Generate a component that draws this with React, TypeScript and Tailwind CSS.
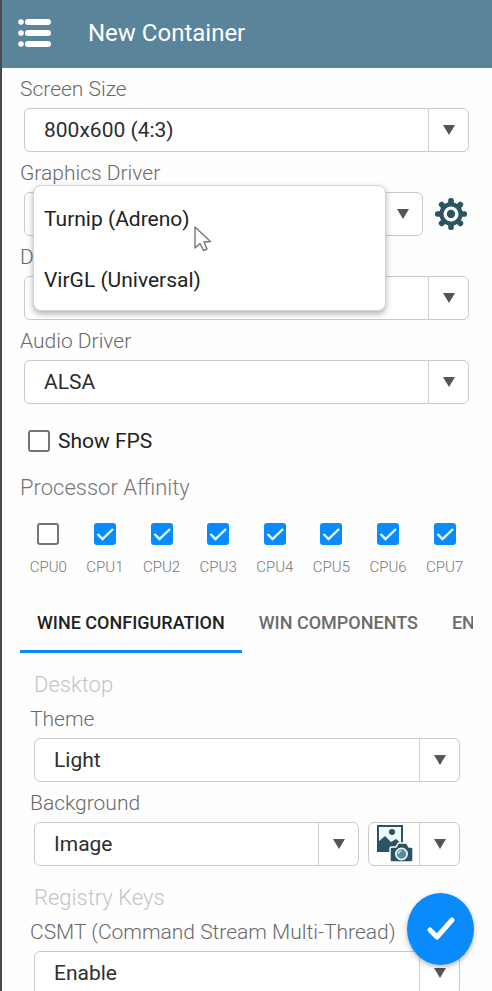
import type { ReactNode } from "react";
import { clsx } from "clsx";

type SelectFieldProps = {
  id: string;
  label: string;
  options: string[];
  className?: string;
};

const cpus = [0, 1, 2, 3, 4, 5, 6, 7];
const tabs = ["WINE CONFIGURATION", "WIN COMPONENTS", "ENVIRONMENT VARIABLES"];
const graphicsDrivers = ["Turnip (Adreno)", "VirGL (Universal)"];

function ArrowCell() {
  return (
    <span className="pointer-events-none absolute inset-y-0 right-0 flex w-10 items-center justify-center border-l border-[#d0d0d0]">
      <svg width="12" height="10" viewBox="0 0 12 10" aria-hidden="true">
        <path d="M0 0h12L6 10z" fill="#555" />
      </svg>
    </span>
  );
}

function SelectBox({ id, label, options, className }: Readonly<SelectFieldProps>) {
  return (
    <div className={clsx("relative h-11 rounded-md border border-[#cacaca] bg-white", className)}>
      <select
        id={id}
        aria-label={label}
        className="h-full w-full appearance-none bg-transparent pt-0.5 pr-11 pl-[19px] text-[21px] text-[#2e2e2e] outline-none"
      >
        {options.map((option) => (
          <option key={option}>{option}</option>
        ))}
      </select>
      <ArrowCell />
    </div>
  );
}

function FieldLabel({ htmlFor, children }: Readonly<{ htmlFor: string; children: ReactNode }>) {
  return (
    <label htmlFor={htmlFor} className="flex h-10 items-center whitespace-nowrap pt-1 text-[21px] font-light text-[#6a6a6a]">
      {children}
    </label>
  );
}

function Field({ id, label, options }: Readonly<SelectFieldProps>) {
  return (
    <div>
      <FieldLabel htmlFor={id}>{label}</FieldLabel>
      <SelectBox id={id} label={label} options={options} className="ml-1" />
    </div>
  );
}

function Checkbox({ id, defaultChecked = false }: Readonly<{ id: string; defaultChecked?: boolean }>) {
  return (
    <span className="relative flex size-[22px]">
      <input
        id={id}
        type="checkbox"
        defaultChecked={defaultChecked}
        className="peer size-[22px] appearance-none rounded-[3px] border-2 border-[#757575] bg-white checked:border-[#0a8bfb] checked:bg-[#0a8bfb]"
      />
      <svg
        viewBox="0 0 22 22"
        className="pointer-events-none absolute inset-0 hidden peer-checked:block"
        fill="none"
        stroke="#e8ffff"
        strokeWidth="2.4"
        aria-hidden="true"
      >
        <path d="M3.5 11l5 5L19 6" />
      </svg>
    </span>
  );
}

function MenuIcon() {
  return (
    <svg width="34" height="28" viewBox="0 0 34 28" fill="#fff" aria-hidden="true">
      {[0, 11, 22].map((y) => (
        <g key={y}>
          <circle cx="3" cy={y + 3} r="2.8" />
          <rect x="7" y={y} width="26" height="6" rx="3" />
        </g>
      ))}
    </svg>
  );
}

function GearIcon() {
  return (
    <svg width="32" height="34" viewBox="-17 -17 34 34" aria-hidden="true">
      <g fill="#2b5361">
        {[0, 45, 90, 135, 180, 225, 270, 315].map((angle) => (
          <rect key={angle} x="-3" y="-17" width="6" height="9" rx="2.4" transform={`rotate(${angle})`} />
        ))}
        <circle r="12.4" />
      </g>
      <circle r="6.2" fill="none" stroke="#fff" strokeWidth="3.6" />
    </svg>
  );
}

function WallpaperIcon() {
  return (
    <svg width="36" height="38" viewBox="0 0 36 38" aria-hidden="true">
      <path d="M1 1h24v25H1z" fill="#effcff" stroke="#2b5361" strokeWidth="2" />
      <circle cx="15" cy="7" r="3" fill="#2b5361" />
      <path d="M1 27V17l7-6 6 6 5-3 6 5v8z" fill="#2b5361" />
      <path
        d="M15 22h4l2.500-4h8l2.500 4h2.500q1.500 0 1.500 1.500v12q0 1.500-1.500 1.500H14.500q-1.500 0-1.500-1.500v-12q0-1.500 2-1.500z"
        fill="#2b5361"
        stroke="#fff"
        strokeWidth="1.400"
      />
      <circle cx="24.500" cy="29" r="5.600" fill="#5d8797" stroke="#e8f5f8" strokeWidth="1.800" />
      <path d="M21.500 29a3 3 0 0 1 3-3" fill="none" stroke="#e8f5f8" strokeWidth="1.200" />
    </svg>
  );
}

function CursorIcon() {
  return (
    <svg width="18" height="26" viewBox="0 0 18 26" className="absolute top-10 left-[160px]" aria-hidden="true">
      <path
        d="M1 1v21l5-4.500 3.500 7 3.500-1.500-3-7 6.500-.5z"
        fill="#fff"
        stroke="#777"
        strokeWidth="1.400"
        strokeLinejoin="round"
      />
    </svg>
  );
}

function DriverMenu() {
  return (
    <div
      role="listbox"
      aria-label="Graphics Driver"
      className="absolute -top-[7px] right-[37px] left-[9px] z-10 rounded-lg border border-[#d4d4d4] bg-white pt-0.5 shadow-[0_3px_6px_rgba(0,0,0,0.3)]"
    >
      {graphicsDrivers.map((driver, index) => (
        <button
          key={driver}
          type="button"
          role="option"
          aria-selected={index === 0}
          className="flex h-[61px] w-full items-center pt-0.5 pl-2.5 text-[21px] text-[#222]"
        >
          {driver}
        </button>
      ))}
      <CursorIcon />
    </div>
  );
}

function SectionTitle({ children }: Readonly<{ children: ReactNode }>) {
  return <h2 className="pl-1 text-[22px] leading-[26px] font-light text-[#c4c4c4]">{children}</h2>;
}

export default function App() {
  return (
    <div className="flex h-screen flex-col overflow-hidden border-l-2 border-[#4a4a4a] bg-[#fefefe] font-['Roboto',sans-serif]">
      <header className="flex h-[68px] shrink-0 items-center gap-9 bg-[#5a8499] pb-0.5 pl-4">
        <button type="button" aria-label="Menu">
          <MenuIcon />
        </button>
        <h1 className="text-2xl text-white">New Container</h1>
      </header>

      <main className="min-h-0 flex-1 overflow-hidden pr-[19px] pl-[18px]">
        <div className="pr-1">
          <Field id="screen-size" label="Screen Size" options={["800x600 (4:3)"]} />

          <FieldLabel htmlFor="graphics-driver">Graphics Driver</FieldLabel>
          <div className="flex items-center gap-3">
            <div className="relative ml-1 flex-1">
              <SelectBox id="graphics-driver" label="Graphics Driver" options={graphicsDrivers} />
              <DriverMenu />
            </div>
            <button type="button" aria-label="Graphics driver settings" className="mr-0.5">
              <GearIcon />
            </button>
          </div>

          <Field id="dx-wrapper" label="DX Wrapper" options={["DXVK"]} />
          <Field id="audio-driver" label="Audio Driver" options={["ALSA"]} />
        </div>

        <div className="mt-[26px] flex h-[22px] items-center gap-2 pl-2">
          <Checkbox id="show-fps" />
          <label htmlFor="show-fps" className="pt-0.5 text-[21px] text-[#222]">
            Show FPS
          </label>
        </div>

        <fieldset className="mt-5">
          <legend className="text-[22px] leading-8 font-light text-[#777]">Processor Affinity</legend>
          <div className="mt-[19px] grid grid-cols-8">
            {cpus.map((cpu) => (
              <div key={cpu} className="flex flex-col items-center gap-3">
                <Checkbox id={`cpu-${cpu}`} defaultChecked={cpu > 0} />
                <label htmlFor={`cpu-${cpu}`} className="text-[15px] leading-5 font-light text-[#777]">
                  CPU{cpu}
                </label>
              </div>
            ))}
          </div>
        </fieldset>

        <div role="tablist" className="mt-[18px] flex overflow-hidden">
          {tabs.map((tab, index) => (
            <button
              key={tab}
              type="button"
              role="tab"
              aria-selected={index === 0}
              className={clsx(
                "h-[58px] shrink-0 border-b-3 px-[17px] text-lg font-medium whitespace-nowrap",
                index === 0 ? "border-[#0a8bfb] text-[#222]" : "border-transparent text-[#6c6c6c]",
              )}
            >
              {tab}
            </button>
          ))}
        </div>

        <section className="mt-[19px] pr-[13px] pl-2.5">
          <SectionTitle>Desktop</SectionTitle>
          <Field id="theme" label="Theme" options={["Light"]} />

          <FieldLabel htmlFor="background">Background</FieldLabel>
          <div className="ml-1 flex gap-[9px]">
            <SelectBox id="background" label="Background" options={["Image"]} className="flex-1" />
            <button
              type="button"
              aria-label="Choose wallpaper"
              className="relative flex h-11 w-[92px] items-center rounded-md border border-[#cacaca] bg-white pl-2"
            >
              <WallpaperIcon />
              <ArrowCell />
            </button>
          </div>
        </section>

        <section className="mt-[19px] pr-[13px] pl-2.5">
          <SectionTitle>Registry Keys</SectionTitle>
          <Field id="csmt" label="CSMT (Command Stream Multi-Thread)" options={["Enable"]} />
        </section>
      </main>

      <button
        type="button"
        aria-label="Save container"
        className="fixed right-[18px] bottom-[26px] z-20 flex h-[72px] w-[67px] items-center justify-center rounded-[50%] bg-[#0a8bfb] shadow-[0_2px_5px_rgba(0,0,0,0.3)]"
      >
        <svg width="32" height="28" viewBox="0 0 32 28" fill="none" aria-hidden="true">
          <path d="M5 15l7 7L27 5" stroke="#fff" strokeWidth="5" strokeLinecap="round" strokeLinejoin="round" />
        </svg>
      </button>
    </div>
  );
}
